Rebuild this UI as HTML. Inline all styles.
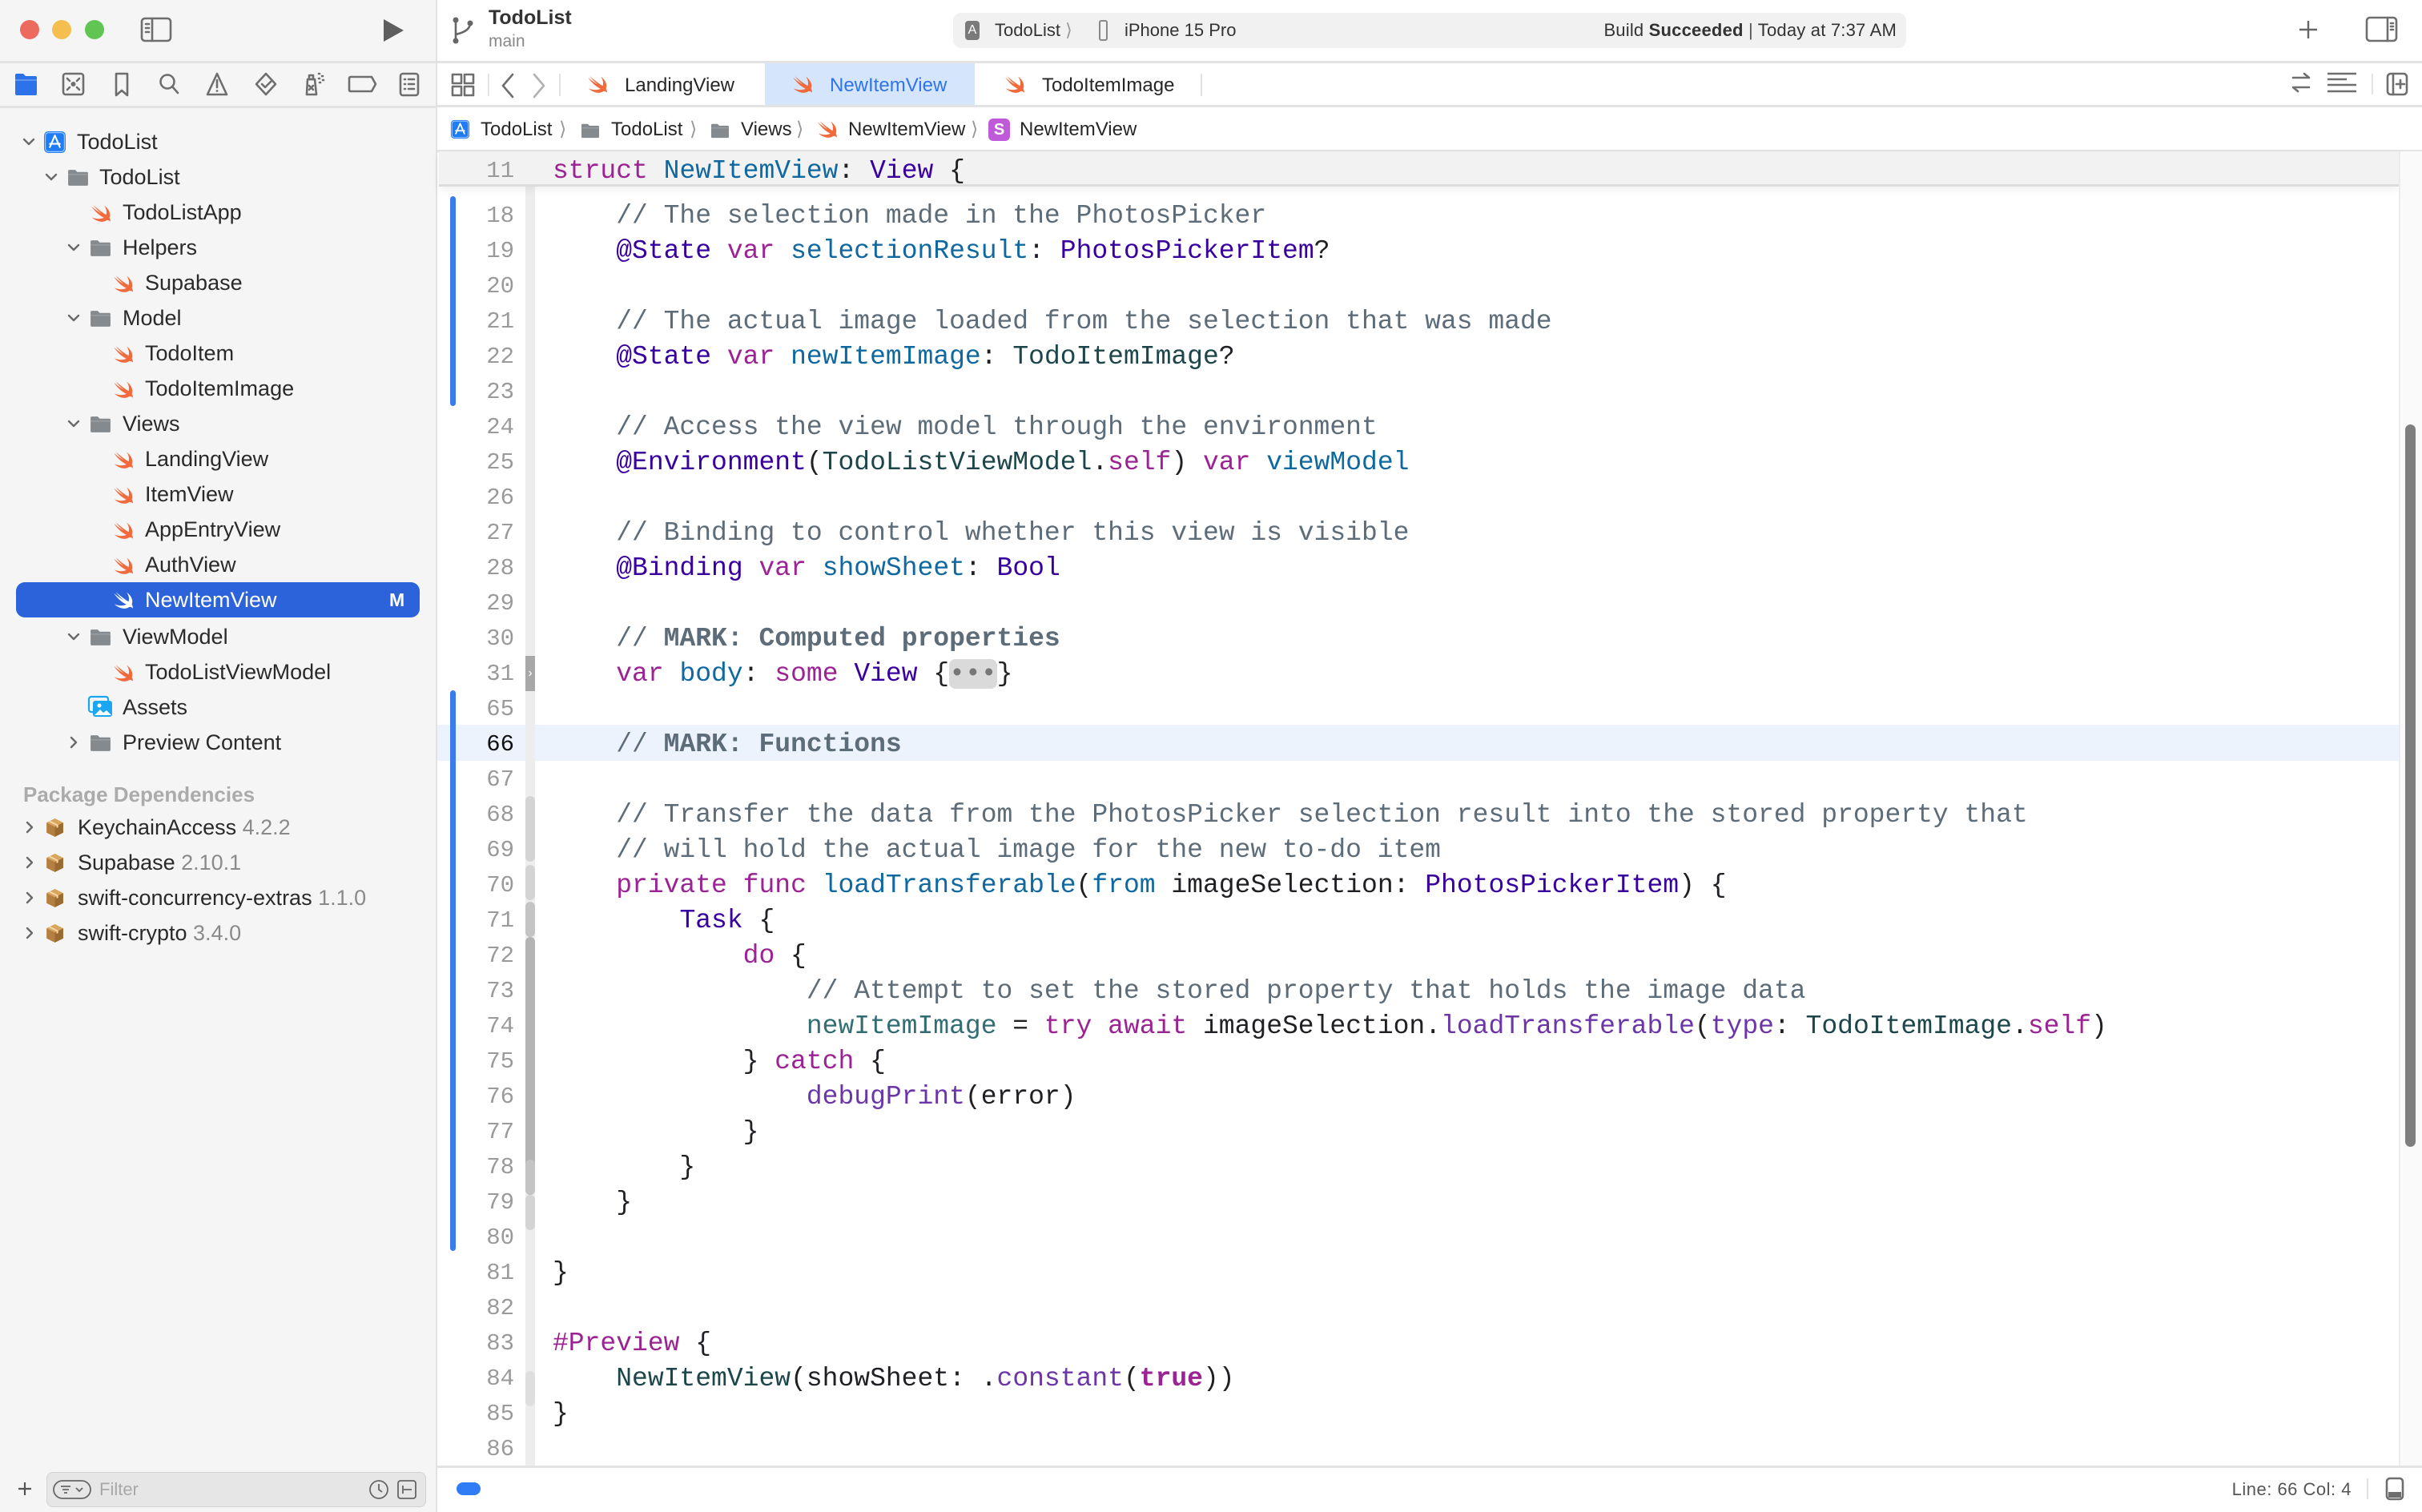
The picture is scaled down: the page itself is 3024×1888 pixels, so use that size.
<!DOCTYPE html>
<html><head><meta charset="utf-8"><style>
*{margin:0;padding:0;box-sizing:border-box}
body{width:3024px;height:1888px;overflow:hidden;background:#fff;font-family:"Liberation Sans",sans-serif;position:relative;color:#262626}
.a{position:absolute}
#side{left:0;top:0;width:546px;height:1888px;background:#f5f5f5;border-right:2px solid #e2e2e2}
.hl{height:3px;background:#e3e3e3}
.row{position:absolute;height:44px;line-height:44px;font-size:27px;white-space:nowrap;color:#2a2a2a}
.chev{position:absolute;width:22px;height:22px}
.code{position:absolute;left:0;font-family:"Liberation Mono",monospace;font-size:33px;white-space:pre;line-height:44px;color:#1f1f24}
.k{color:#9b2393}.c{color:#5d6c79}.cb{color:#5d6c79;font-weight:bold}.t{color:#3900a0}.pt{color:#1c464a}.d{color:#0f68a0}.pv{color:#326d74}.sm{color:#6c36a9}.kb{color:#9b2393;font-weight:bold}
.ln{position:absolute;left:560px;width:82px;text-align:right;font-family:"Liberation Mono",monospace;font-size:29px;color:#9a9a9a;line-height:44px}
.tab{position:absolute;top:79px;height:55px;line-height:55px;font-size:24px;color:#262626}
.bc{position:absolute;top:131px;height:58px;line-height:58px;font-size:24px;color:#262626}
.ic{stroke:#6e6e6e;fill:none;stroke-width:2.6;stroke-linecap:round;stroke-linejoin:round}
</style></head><body>
<svg width="0" height="0" style="position:absolute"><defs>
<symbol id="sw" viewBox="0 0 24 24"><path fill="#f26a3b" d="M20.5 16c1.5-4.2-.3-8.8-5.2-12.4 2.2 3.2 2.9 6.6 1.9 9.4C13.5 10.8 8.5 7 4.3 3.2c2.5 3.4 5.4 6.2 8 8.4-3.3-1.9-6.8-4.4-9.8-7 3.3 4.7 7.8 9 12.5 11.3-3.5 1.5-7.7 1.4-11.8-.3 3.8 3.900 10.3 5.4 13.8 3.3 1.7-1 3.1-.6 4.3.9.4-1.3 0-2.8-.8-3.8z"/></symbol>
<symbol id="swf" viewBox="0 0 24 24"><path fill="#fff" d="M20.5 16c1.5-4.2-.3-8.8-5.2-12.4 2.2 3.2 2.9 6.6 1.9 9.4C13.5 10.8 8.5 7 4.3 3.2c2.5 3.4 5.4 6.2 8 8.4-3.3-1.9-6.8-4.4-9.8-7 3.3 4.7 7.8 9 12.5 11.3-3.5 1.5-7.7 1.4-11.8-.3 3.8 3.9 10.3 5.4 13.8 3.3 1.7-1 3.1-.6 4.3.9.4-1.3 0-2.8-.8-3.8z"/></symbol>
<symbol id="fd" viewBox="0 0 28 24"><path fill="#858a8f" d="M2 4.5Q2 3 3.5 3h7l2.5 2.5h11.5Q26 5.5 26 7v13.5q0 1.5-1.5 1.5h-21Q2 22 2 20.5z"/><path fill="#fff" opacity=".25" d="M2 8h24v1H2z"/></symbol>
<symbol id="cd" viewBox="0 0 22 22"><path d="M5 8l6 6 6-6" stroke="#6a6a6a" stroke-width="2.4" fill="none" stroke-linecap="round" stroke-linejoin="round"/></symbol>
<symbol id="cr" viewBox="0 0 22 22"><path d="M8 5l6 6-6 6" stroke="#6a6a6a" stroke-width="2.4" fill="none" stroke-linecap="round" stroke-linejoin="round"/></symbol>
<symbol id="pk" viewBox="0 0 26 26"><path fill="#b5803f" d="M13 2l10 5v12l-10 5-10-5V7z"/><path fill="#d9a45c" d="M13 2l10 5-10 5L3 7z"/><path fill="#9a6a30" d="M13 12v12l10-5V7z"/><path fill="#f3d9a8" d="M7 4.5l10 5v3l-2 1v-3L5 5.5z"/></symbol>
<symbol id="app" viewBox="0 0 28 28"><rect x="1" y="1" width="26" height="26" rx="5" fill="#1f7cf5"/><rect x="2.5" y="2.5" width="23" height="23" rx="4" fill="none" stroke="#9cc8ff" stroke-width="1.2"/><path d="M14 6l-6 14M14 6l6 14M8 16h12" stroke="#fff" stroke-width="2" stroke-linecap="round"/></symbol>
</defs></svg>

<div id="side" class="a">
 <div class="a" style="left:25px;top:25px;width:24px;height:24px;border-radius:50%;background:#ec6a5e"></div>
 <div class="a" style="left:65px;top:25px;width:24px;height:24px;border-radius:50%;background:#f4bf4f"></div>
 <div class="a" style="left:106px;top:25px;width:24px;height:24px;border-radius:50%;background:#61c554"></div>
 <svg class="a" style="left:175px;top:21px" width="40" height="32" viewBox="0 0 40 32"><rect x="2" y="2" width="36" height="28" rx="4" class="ic"/><path d="M15 2v28M7 9h4M7 14h4M7 19h4" class="ic"/></svg>
 <svg class="a" style="left:476px;top:22px" width="30" height="32" viewBox="0 0 30 32"><path d="M3 2L28 16 3 30z" fill="#5e5e5e"/></svg>
 <div class="a hl" style="left:0;top:76px;width:546px"></div>
 <svg class="a" style="left:0;top:88px" width="546" height="34" viewBox="0 0 546 34">
  <path d="M19 6q0-2 2-2h8l3 3h12q2 0 2 2v20q0 2-2 2H21q-2 0-2-2z" fill="#2c72e8"/><path d="M19 12h27" stroke="#fff" stroke-width="1.2" opacity=".4"/>
  <rect x="79" y="4" width="25" height="26" rx="3" class="ic"/><circle cx="91.5" cy="17" r="3" fill="#6e6e6e"/><path d="M84 10l3 3M99 10l-3 3M84 24l3-3M99 24l-3-3" class="ic" stroke-width="1.8"/>
  <path d="M145 4h14v27l-7-6-7 6z" class="ic"/>
  <circle cx="209" cy="14" r="8.5" class="ic"/><path d="M215 20l7 8" class="ic"/>
  <path d="M271 4l-12 26h24z" class="ic"/><path d="M271 12v9" class="ic"/><circle cx="271" cy="25.5" r="1.4" fill="#6e6e6e"/>
  <path d="M332 4l12 13-12 13-12-13z" class="ic"/><path d="M327 17l4 4 7-7" class="ic"/>
  <path d="M384 11h9l2 19h-12z" class="ic"/><path d="M386 6h5v5h-5zM386 19l5 5M391 19l-5 5" class="ic" stroke-width="2"/><path d="M398 4h1M402 7h1M398 10h1M403 12h1M399 15h1" class="ic" stroke-width="1.6"/>
  <path d="M438 8h26l5 9-5 9h-26q-2 0-2-2V10q0-2 2-2z" class="ic"/>
  <rect x="500" y="4" width="22" height="27" rx="3" class="ic"/><path d="M505 11h1M505 17h1M505 23h1M510 11h7M510 17h7M510 23h7" class="ic" stroke-width="2"/>
 </svg>
 <div class="a hl" style="left:0;top:132px;width:546px"></div>

 <div class="a" style="left:0;top:2px;width:546px;height:1200px">
 <svg class="a chev" style="left:25px;top:164px"><use href="#cd"/></svg>
 <svg class="a" style="left:54px;top:161px" width="29" height="29"><use href="#app"/></svg>
 <div class="row" style="left:96px;top:153px">TodoList</div>

 <svg class="a chev" style="left:53px;top:208px"><use href="#cd"/></svg>
 <svg class="a" style="left:83px;top:207px" width="29" height="25"><use href="#fd"/></svg>
 <div class="row" style="left:124px;top:197px">TodoList</div>

 <svg class="a" style="left:111px;top:250px" width="30" height="30"><use href="#sw"/></svg>
 <div class="row" style="left:153px;top:241px">TodoListApp</div>

 <svg class="a chev" style="left:81px;top:296px"><use href="#cd"/></svg>
 <svg class="a" style="left:111px;top:295px" width="29" height="25"><use href="#fd"/></svg>
 <div class="row" style="left:153px;top:285px">Helpers</div>

 <svg class="a" style="left:139px;top:338px" width="30" height="30"><use href="#sw"/></svg>
 <div class="row" style="left:181px;top:329px">Supabase</div>

 <svg class="a chev" style="left:81px;top:384px"><use href="#cd"/></svg>
 <svg class="a" style="left:111px;top:383px" width="29" height="25"><use href="#fd"/></svg>
 <div class="row" style="left:153px;top:373px">Model</div>

 <svg class="a" style="left:139px;top:426px" width="30" height="30"><use href="#sw"/></svg>
 <div class="row" style="left:181px;top:417px">TodoItem</div>
 <svg class="a" style="left:139px;top:470px" width="30" height="30"><use href="#sw"/></svg>
 <div class="row" style="left:181px;top:461px">TodoItemImage</div>

 <svg class="a chev" style="left:81px;top:516px"><use href="#cd"/></svg>
 <svg class="a" style="left:111px;top:515px" width="29" height="25"><use href="#fd"/></svg>
 <div class="row" style="left:153px;top:505px">Views</div>

 <svg class="a" style="left:139px;top:558px" width="30" height="30"><use href="#sw"/></svg>
 <div class="row" style="left:181px;top:549px">LandingView</div>
 <svg class="a" style="left:139px;top:602px" width="30" height="30"><use href="#sw"/></svg>
 <div class="row" style="left:181px;top:593px">ItemView</div>
 <svg class="a" style="left:139px;top:646px" width="30" height="30"><use href="#sw"/></svg>
 <div class="row" style="left:181px;top:637px">AppEntryView</div>
 <svg class="a" style="left:139px;top:690px" width="30" height="30"><use href="#sw"/></svg>
 <div class="row" style="left:181px;top:681px">AuthView</div>

 <div class="a" style="left:20px;top:725px;width:504px;height:44px;border-radius:11px;background:#2c63da"></div>
 <svg class="a" style="left:139px;top:733px" width="30" height="30"><use href="#swf"/></svg>
 <div class="row" style="left:181px;top:725px;color:#fff">NewItemView</div>
 <div class="row" style="left:486px;top:725px;color:#fff;font-weight:bold;font-size:23px">M</div>

 <svg class="a chev" style="left:81px;top:782px"><use href="#cd"/></svg>
 <svg class="a" style="left:111px;top:781px" width="29" height="25"><use href="#fd"/></svg>
 <div class="row" style="left:153px;top:771px">ViewModel</div>

 <svg class="a" style="left:139px;top:824px" width="30" height="30"><use href="#sw"/></svg>
 <div class="row" style="left:181px;top:815px">TodoListViewModel</div>

 <svg class="a" style="left:109px;top:865px" width="33" height="30" viewBox="0 0 33 30"><rect x="2" y="3" width="24" height="19" rx="3" fill="none" stroke="#1aa6f0" stroke-width="2.2"/><rect x="7" y="8" width="24" height="20" rx="3" fill="#1aa6f0"/><circle cx="15" cy="14" r="2.5" fill="#fff"/><path d="M9 26l7-7 4 4 4-3 6 6z" fill="#fff"/></svg>
 <div class="row" style="left:153px;top:859px">Assets</div>

 <svg class="a chev" style="left:81px;top:914px"><use href="#cr"/></svg>
 <svg class="a" style="left:111px;top:913px" width="29" height="25"><use href="#fd"/></svg>
 <div class="row" style="left:153px;top:903px">Preview Content</div>

 <div class="row" style="left:29px;top:968px;color:#ababab;font-weight:bold;font-size:26px">Package Dependencies</div>
 <svg class="a chev" style="left:26px;top:1020px"><use href="#cr"/></svg>
 <svg class="a" style="left:55px;top:1018px" width="27" height="27"><use href="#pk"/></svg>
 <div class="row" style="left:97px;top:1009px">KeychainAccess <span style="color:#8a8a8a">4.2.2</span></div>
 <svg class="a chev" style="left:26px;top:1064px"><use href="#cr"/></svg>
 <svg class="a" style="left:55px;top:1062px" width="27" height="27"><use href="#pk"/></svg>
 <div class="row" style="left:97px;top:1053px">Supabase <span style="color:#8a8a8a">2.10.1</span></div>
 <svg class="a chev" style="left:26px;top:1108px"><use href="#cr"/></svg>
 <svg class="a" style="left:55px;top:1106px" width="27" height="27"><use href="#pk"/></svg>
 <div class="row" style="left:97px;top:1097px">swift-concurrency-extras <span style="color:#8a8a8a">1.1.0</span></div>
 <svg class="a chev" style="left:26px;top:1152px"><use href="#cr"/></svg>
 <svg class="a" style="left:55px;top:1150px" width="27" height="27"><use href="#pk"/></svg>
 <div class="row" style="left:97px;top:1141px">swift-crypto <span style="color:#8a8a8a">3.4.0</span></div>
 </div>

 <svg class="a" style="left:20px;top:1848px" width="22" height="22" viewBox="0 0 22 22"><path d="M11 3v16M3 11h16" stroke="#555" stroke-width="2.2"/></svg>
 <div class="a" style="left:58px;top:1838px;width:474px;height:44px;border-radius:8px;background:#e6e6e6;border:1px solid #d2d2d2"></div>
 <svg class="a" style="left:66px;top:1848px" width="48" height="24" viewBox="0 0 48 24"><rect x="1" y="1" width="46" height="22" rx="11" fill="none" stroke="#666" stroke-width="1.8"/><path d="M10 8h12M12 12h8M14 16h4M29 10l4 4 4-4" stroke="#666" stroke-width="1.8" fill="none"/></svg>
 <div class="a" style="left:124px;top:1846px;font-size:22px;line-height:28px;color:#a8a8a8">Filter</div>
 <svg class="a" style="left:460px;top:1846px" width="62" height="28" viewBox="0 0 62 28"><circle cx="13" cy="14" r="11" fill="none" stroke="#666" stroke-width="1.8"/><path d="M13 7v7l4 3" stroke="#666" stroke-width="1.8" fill="none"/><rect x="37" y="3" width="22" height="22" rx="3" fill="none" stroke="#666" stroke-width="1.8"/><path d="M43 9v10M44 14h10" stroke="#666" stroke-width="1.8"/></svg>
</div>

<svg class="a" style="left:563px;top:18px" width="30" height="40" viewBox="0 0 30 40"><circle cx="6" cy="7" r="3.5" fill="#666"/><circle cx="6" cy="33" r="3.5" fill="#666"/><circle cx="24" cy="11" r="3.5" fill="#666"/><path d="M6 7v26M24 11q0 10-18 14" stroke="#666" stroke-width="2.6" fill="none"/></svg>
<div class="a" style="left:610px;top:8px;font-size:25px;font-weight:bold;color:#333">TodoList</div>
<div class="a" style="left:610px;top:40px;font-size:21px;color:#888">main</div>
<div class="a" style="left:1190px;top:16px;width:1190px;height:44px;border-radius:10px;background:#f1f1f1"></div>
<div class="a" style="left:1205px;top:26px;width:18px;height:24px;border-radius:4px;background:#7a7a7a;color:#fff;font-size:16px;text-align:center;line-height:24px">A</div>
<div class="a" style="left:1242px;top:23px;font-size:22px;color:#333;line-height:30px">TodoList <span style="color:#999">⟩</span></div>
<div class="a" style="left:1372px;top:25px;width:11px;height:26px;border:2px solid #888;border-radius:3px"></div>
<div class="a" style="left:1404px;top:23px;font-size:22px;color:#333;line-height:30px">iPhone 15 Pro</div>
<div class="a" style="left:1860px;top:23px;width:508px;text-align:right;font-size:22px;color:#333;line-height:30px;letter-spacing:.2px">Build <b>Succeeded</b> <span style="color:#555">|</span> Today at 7:37 AM</div>
<svg class="a" style="left:2868px;top:23px" width="28" height="28" viewBox="0 0 28 28"><path d="M14 3v22M3 14h22" stroke="#666" stroke-width="2.4"/></svg>
<svg class="a" style="left:2953px;top:20px" width="42" height="34" viewBox="0 0 42 34"><rect x="2" y="2" width="37" height="29" rx="4" class="ic"/><path d="M28 2v29M32 9h3M32 13h3M32 17h3" class="ic" stroke-width="2"/></svg>
<div class="a hl" style="left:546px;top:76px;width:2478px"></div>

<svg class="a" style="left:563px;top:91px" width="30" height="30" viewBox="0 0 30 30"><rect x="2" y="2" width="11" height="11" class="ic" stroke-width="2"/><rect x="17" y="2" width="11" height="11" class="ic" stroke-width="2"/><rect x="2" y="17" width="11" height="11" class="ic" stroke-width="2"/><rect x="17" y="17" width="11" height="11" class="ic" stroke-width="2"/></svg>
<div class="a" style="left:609px;top:92px;width:2px;height:28px;background:#e2e2e2"></div>
<svg class="a" style="left:622px;top:90px" width="24" height="34" viewBox="0 0 24 34"><path d="M18 3L6 17l12 14" class="ic"/></svg>
<svg class="a" style="left:661px;top:90px" width="24" height="34" viewBox="0 0 24 34"><path d="M6 3l12 14L6 31" stroke="#b0b0b0" stroke-width="2.6" fill="none" stroke-linecap="round" stroke-linejoin="round"/></svg>
<div class="a" style="left:698px;top:92px;width:2px;height:28px;background:#e2e2e2"></div>
<svg class="a" style="left:731px;top:91px" width="30" height="30"><use href="#sw"/></svg>
<div class="tab" style="left:780px">LandingView</div>
<div class="a" style="left:955px;top:79px;width:262px;height:53px;background:#d5e5fb"></div>
<svg class="a" style="left:987px;top:91px" width="30" height="30"><use href="#sw"/></svg>
<div class="tab" style="left:1036px;color:#2f74ec">NewItemView</div>
<svg class="a" style="left:1252px;top:91px" width="30" height="30"><use href="#sw"/></svg>
<div class="tab" style="left:1301px">TodoItemImage</div>
<div class="a" style="left:1499px;top:92px;width:2px;height:28px;background:#e2e2e2"></div>
<svg class="a" style="left:2858px;top:88px" width="30" height="30" viewBox="0 0 30 30"><path d="M5 9h20l-6-5M25 21H5l6 5" class="ic" stroke-width="2.2"/></svg>
<svg class="a" style="left:2904px;top:90px" width="40" height="28" viewBox="0 0 40 28"><path d="M2 2h36M2 9h24M2 16h36M2 24h36" stroke="#6e6e6e" stroke-width="2.4"/></svg>
<div class="a" style="left:2961px;top:92px;width:2px;height:26px;background:#e2e2e2"></div>
<svg class="a" style="left:2979px;top:90px" width="28" height="30" viewBox="0 0 28 30"><rect x="2" y="2" width="24" height="26" rx="4" class="ic" stroke-width="2.2"/><path d="M9 2v26M13 15h10M18 10v10" class="ic" stroke-width="2"/></svg>
<div class="a hl" style="left:546px;top:131px;width:2478px"></div>

<div class="a" style="left:0;top:2px;width:1500px;height:190px">
<svg class="a" style="left:562px;top:147px" width="25" height="25"><use href="#app"/></svg>
<div class="bc" style="left:600px">TodoList</div><div class="bc" style="left:698px;color:#999">⟩</div>
<svg class="a" style="left:724px;top:150px" width="26" height="22"><use href="#fd"/></svg>
<div class="bc" style="left:763px">TodoList</div><div class="bc" style="left:861px;color:#999">⟩</div>
<svg class="a" style="left:886px;top:150px" width="26" height="22"><use href="#fd"/></svg>
<div class="bc" style="left:925px">Views</div><div class="bc" style="left:994px;color:#999">⟩</div>
<svg class="a" style="left:1018px;top:145px" width="30" height="30"><use href="#sw"/></svg>
<div class="bc" style="left:1059px">NewItemView</div><div class="bc" style="left:1212px;color:#999">⟩</div>
<div class="a" style="left:1234px;top:146px;width:27px;height:28px;border-radius:6px;background:#bf5ad8;color:#fff;font-size:20px;font-weight:bold;text-align:center;line-height:28px">S</div>
<div class="bc" style="left:1273px">NewItemView</div>
</div>
<div class="a hl" style="left:546px;top:187px;width:2478px"></div>

<div class="a" style="left:546px;top:905px;width:2449px;height:45px;background:#ecf3fd"></div>
<div class="a" style="left:656px;top:233px;width:12px;height:1598px;background:#ededed"></div>
<div class="a" style="left:656px;top:819px;width:12px;height:44px;background:#a8a8a8;color:#fff;font-size:16px;line-height:44px;text-align:center">›</div>
<div class="a" style="left:656px;top:994px;width:12px;height:82px;background:#d4d4d4;border-radius:6px"></div>
<div class="a" style="left:656px;top:1080px;width:12px;height:44px;background:#d4d4d4;border-radius:6px"></div>
<div class="a" style="left:656px;top:1126px;width:12px;height:44px;background:#c4c4c4;border-radius:6px"></div>
<div class="a" style="left:656px;top:1170px;width:12px;height:322px;background:#b4b4b4;border-radius:6px"></div>
<div class="a" style="left:656px;top:1448px;width:12px;height:44px;background:#c4c4c4;border-radius:6px"></div>
<div class="a" style="left:656px;top:1492px;width:12px;height:44px;background:#d4d4d4;border-radius:6px"></div>
<div class="a" style="left:656px;top:1712px;width:12px;height:44px;background:#dedede;border-radius:6px"></div>
<div class="a" style="left:562px;top:245px;width:7px;height:262px;background:#3a7cf0;border-radius:4px"></div>
<div class="a" style="left:562px;top:862px;width:7px;height:700px;background:#3a7cf0;border-radius:4px"></div>

<div class="a" style="left:0;top:248px;width:2995px;height:1584px">
<div class="ln" style="top:0">18<br>19<br>20<br>21<br>22<br>23<br>24<br>25<br>26<br>27<br>28<br>29<br>30<br>31<br>65<br><span style="color:#111">66</span><br>67<br>68<br>69<br>70<br>71<br>72<br>73<br>74<br>75<br>76<br>77<br>78<br>79<br>80<br>81<br>82<br>83<br>84<br>85<br>86</div>
<div class="code" style="left:690px;top:0">    <span class="c">// The selection made in the PhotosPicker</span>
    <span class="t">@State</span> <span class="k">var</span> <span class="d">selectionResult</span>: <span class="t">PhotosPickerItem</span>?

    <span class="c">// The actual image loaded from the selection that was made</span>
    <span class="t">@State</span> <span class="k">var</span> <span class="d">newItemImage</span>: <span class="pt">TodoItemImage</span>?

    <span class="c">// Access the view model through the environment</span>
    <span class="t">@Environment</span>(<span class="pt">TodoListViewModel</span>.<span class="k">self</span>) <span class="k">var</span> <span class="d">viewModel</span>

    <span class="c">// Binding to control whether this view is visible</span>
    <span class="t">@Binding</span> <span class="k">var</span> <span class="d">showSheet</span>: <span class="t">Bool</span>

    <span class="c">// </span><span class="cb">MARK: Computed properties</span>
    <span class="k">var</span> <span class="d">body</span>: <span class="k">some</span> <span class="t">View</span> {<span style="background:#dadada;border-radius:8px;color:#777">•••</span>}

    <span class="c">// </span><span class="cb">MARK: Functions</span>

    <span class="c">// Transfer the data from the PhotosPicker selection result into the stored property that</span>
    <span class="c">// will hold the actual image for the new to-do item</span>
    <span class="k">private</span> <span class="k">func</span> <span class="d">loadTransferable</span>(<span class="d">from</span> imageSelection: <span class="t">PhotosPickerItem</span>) {
        <span class="t">Task</span> {
            <span class="k">do</span> {
                <span class="c">// Attempt to set the stored property that holds the image data</span>
                <span class="pv">newItemImage</span> = <span class="k">try</span> <span class="k">await</span> imageSelection.<span class="sm">loadTransferable</span>(<span class="sm">type</span>: <span class="pt">TodoItemImage</span>.<span class="k">self</span>)
            } <span class="k">catch</span> {
                <span class="sm">debugPrint</span>(error)
            }
        }
    }

}

<span class="k">#Preview</span> {
    <span class="pt">NewItemView</span>(showSheet: .<span class="sm">constant</span>(<span class="kb">true</span>))
}
</div>
</div>

<div class="a" style="left:548px;top:189px;width:2447px;height:44px;background:#f2f2f2;border-bottom:3px solid #dcdcdc;box-shadow:0 4px 10px rgba(0,0,0,.06)"></div>
<div class="ln" style="top:192px;height:44px">11</div>
<div class="code" style="left:690px;top:192px"><span class="k">struct</span> <span class="d">NewItemView</span>: <span class="t">View</span> {</div>

<div class="a" style="left:2995px;top:189px;width:29px;height:1642px;background:#fafafa;border-left:2px solid #ececec"></div>
<div class="a" style="left:3003px;top:530px;width:13px;height:902px;background:#7f7f7f;border-radius:7px"></div>

<div class="a hl" style="left:546px;top:1830px;width:2478px"></div>
<div class="a" style="left:570px;top:1851px;width:30px;height:16px;background:#2f7cf6;border-radius:8px"></div>
<div class="a" style="left:2680px;top:1845px;width:256px;text-align:right;font-size:22px;color:#555;line-height:30px;letter-spacing:.5px">Line: 66  Col: 4</div>
<div class="a" style="left:2955px;top:1846px;width:2px;height:26px;background:#e0e0e0"></div>
<svg class="a" style="left:2978px;top:1844px" width="24" height="30" viewBox="0 0 24 30"><rect x="2" y="2" width="20" height="26" rx="4" class="ic" stroke-width="2"/><rect x="4" y="19" width="16" height="7" fill="#6e6e6e"/></svg>
</body></html>
